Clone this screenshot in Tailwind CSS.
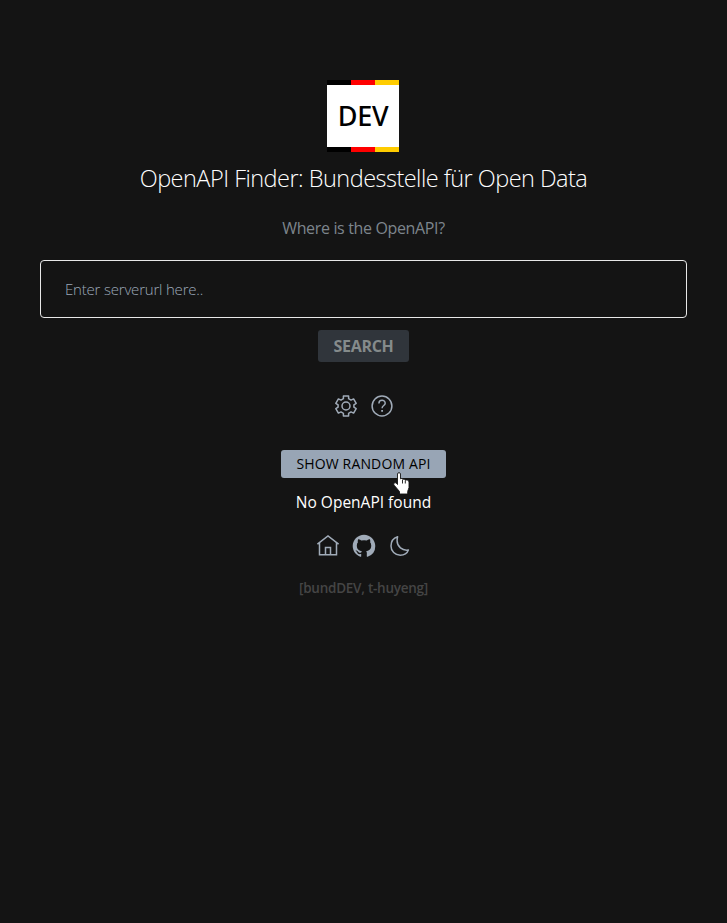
<!DOCTYPE html>
<html lang="en">
<head>
<meta charset="utf-8">
<title>OpenAPI Finder</title>
<script src="https://cdn.jsdelivr.net/npm/@tailwindcss/browser@4"></script>
</head>
<body class="min-h-screen bg-[#141414] font-['Open_Sans','Noto_Sans',sans-serif] text-white">
<main class="flex flex-col items-center px-10 pt-20">
  <div class="mr-px flex h-[72px] w-[72px] flex-col bg-white">
    <div class="grid h-[5px] grid-cols-3"><i class="bg-black"></i><i class="bg-[#ff0000]"></i><i class="bg-[#ffcc00]"></i></div>
    <div class="flex flex-1 items-center justify-center pb-[2px] font-['Noto_Sans'] text-[27px] leading-none font-medium tracking-[-0.3px] text-black"><span class="whitespace-nowrap">DEV</span></div>
    <div class="grid h-[5px] grid-cols-3"><i class="bg-black"></i><i class="bg-[#ff0000]"></i><i class="bg-[#ffcc00]"></i></div>
  </div>
  <h1 class="mt-2 h-9 text-[23.5px] leading-9 font-light tracking-[-0.52px] whitespace-nowrap">OpenAPI Finder: Bundesstelle für Open Data</h1>
  <p class="mt-5 h-6 text-base leading-6 tracking-[-0.35px] text-[#7d858c]">Where is the OpenAPI?</p>
  <input class="mt-5 h-[58px] w-full rounded-[4px] border border-[#e8e8e8] bg-transparent px-6 text-[15px] font-light tracking-[-0.2px] placeholder:text-[#9ca8b8]" placeholder="Enter serverurl here..">
  <button class="mt-3 h-8 w-[91px] rounded-[3px] bg-[#30353b] text-[16px] leading-8 font-bold tracking-[-0.3px] text-[#858b8b]">SEARCH</button>
  <div class="mt-8 flex h-6 gap-3 text-[#a0abb8]">
    <svg class="size-6" viewBox="0 0 24 24" fill="none" stroke="currentColor" stroke-width="1.5" stroke-linejoin="round"><path d="M9.400 2h5.200v2.700l2.400 1.400 2.600-1.200 2.600 4.400-2.300 1.500v2.400l2.300 1.500-2.600 4.400-2.600-1.200-2.400 1.400V22H9.400v-2.700L7 17.900l-2.600 1.200-2.600-4.400 2.300-1.500v-2.400L1.800 9.300l2.600-4.400L7 6.100l2.400-1.400z"/><circle cx="12" cy="12" r="4"/></svg>
    <svg class="size-6" viewBox="0 0 24 24" fill="none" stroke="currentColor" stroke-width="1.5"><circle cx="12" cy="12" r="9.900"/><path d="M8.900 9.500c0-4.300 6.300-4.100 6.300-.3 0 2.400-3.100 2.200-3.100 5"/><path d="M11.200 16.800h1.800" stroke-width="1.7"/></svg>
  </div>
  <button class="mt-8 h-7 w-[165px] rounded-[3px] bg-[#98a5b5] text-[14px] leading-7 tracking-[0.15px] whitespace-nowrap text-black">SHOW RANDOM API</button>
  <p class="mt-3 h-6 text-[15.5px] leading-6 whitespace-nowrap">No OpenAPI found</p>
  <div class="mt-5 flex h-6 gap-3 text-[#a0abb8]">
    <svg class="size-6" viewBox="0 0 24 24" fill="none" stroke="currentColor" stroke-width="1.5"><path d="M1.400 10.200 12 2l10.600 8.200M3.500 9v11.700h17V9M9.500 20.500V13.500h5v7"/></svg>
    <svg class="size-6" viewBox="-.5 -.5 17 17" fill="currentColor"><path d="M8 0C3.580 0 0 3.580 0 8c0 3.540 2.290 6.530 5.470 7.590.4.070.55-.17.55-.38 0-.19-.01-.82-.01-1.490-2.010.37-2.530-.49-2.690-.94-.09-.23-.48-.94-.82-1.130-.28-.15-.68-.52-.01-.53.63-.01 1.080.58 1.230.82.72 1.210 1.870.87 2.330.66.07-.52.28-.87.51-1.070-1.780-.2-3.640-.89-3.640-3.950 0-.87.31-1.590.82-2.150-.08-.2-.36-1.020.08-2.120 0 0 .67-.21 2.200.82a7.420 7.420 0 0 1 4 0c1.530-1.040 2.200-.82 2.200-.82.44 1.100.16 1.920.08 2.120.51.56.82 1.270.82 2.150 0 3.070-1.870 3.750-3.650 3.950.29.25.54.73.54 1.480 0 1.070-.01 1.930-.01 2.200 0 .21.15.46.55.38A8.010 8.010 0 0 0 16 8c0-4.420-3.580-8-8-8z"/></svg>
    <svg class="size-6" viewBox="0 0 24 24" fill="none" stroke="currentColor" stroke-width="1.5" stroke-linejoin="round"><path d="M9.600 2.700C5.600 4 3 7.500 3 11.900c0 5.200 4 9.300 9.200 9.300 3.900 0 7-2 8.200-5.200-6.200 1-11.300-3.600-11.300-9.200 0-1.400.1-2.800.5-4.100z"/></svg>
  </div>
  <p class="mt-5 h-5 text-[13.5px] leading-5 font-semibold tracking-[-0.25px] whitespace-nowrap text-[#454545]">[bundDEV, t-huyeng]</p>
</main>
<svg class="absolute top-[472px] left-[393px] h-[23px] w-[17px]" viewBox="0 0 17 23" fill="white" stroke="#141414" stroke-width=".9" stroke-linejoin="round"><path d="M4.500 2c0-1.800 3-1.800 3 0v4.800c1-.6 2-.3 2.300.6 1-.5 2.200-.1 2.500.8 1-.5 3.700-.1 3.700 1.800v5.500c0 1.500-1.300 2.500-1.300 4V22H6.500v-2.500L1.200 13.300C-.2 11.500 2 10 3.300 11.200l1.200 1.300z"/><path d="M9.500 8v3.500M12.300 8.500v3"/></svg>
</body>
</html>
